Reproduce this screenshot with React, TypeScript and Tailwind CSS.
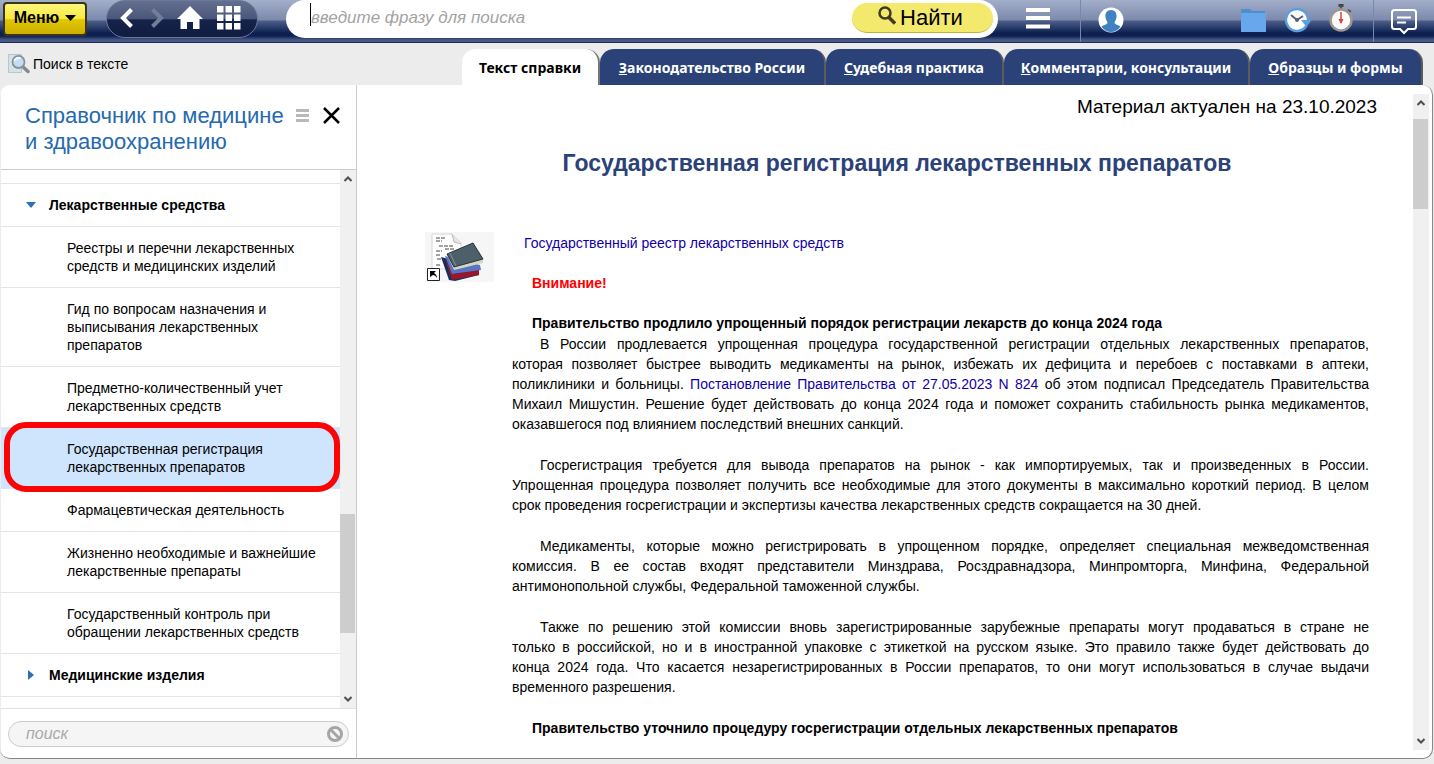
import type { ReactNode } from "react";

type Tab = { key: string; label: string; width: string };

const tabs: Tab[] = [
  { key: "З", label: "аконодательство России", width: "w-[226px]" },
  { key: "С", label: "удебная практика", width: "w-[178px]" },
  { key: "К", label: "омментарии, консультации", width: "w-[246px]" },
  { key: "О", label: "бразцы и формы", width: "w-[173px]" },
];

const topics = [
  "Реестры и перечни лекарственных средств и медицинских изделий",
  "Гид по вопросам назначения и выписывания лекарственных препаратов",
  "Предметно-количественный учет лекарственных средств",
  "Государственная регистрация лекарственных препаратов",
  "Фармацевтическая деятельность",
  "Жизненно необходимые и важнейшие лекарственные препараты",
  "Государственный контроль при обращении лекарственных средств",
];
const activeTopic = 3;

function SearchPageIcon() {
  return (
    <svg width="22" height="20" viewBox="0 0 22 20" aria-hidden="true">
      <path d="M.5.5h13v18H.5z" fill="#d5e3e6" stroke="#b4c8cc" />
      <path d="M14 12l6 5.500" stroke="#85898d" strokeWidth="3.500" strokeLinecap="round" />
      <circle cx="10.500" cy="8" r="6" fill="#c6dcf4" stroke="#8a9299" strokeWidth="1.800" />
      <path d="M6.500 7a4 4 0 0 1 6-2.500" fill="none" stroke="#f2f8ff" strokeWidth="2" />
    </svg>
  );
}

function GridIcon() {
  return (
    <svg width="24" height="24" viewBox="0 0 24 24" fill="#fff" aria-hidden="true">
      {[0, 8.5, 17].map((y) => [0, 8.5, 17].map((x) => <rect key={`${x}-${y}`} x={x} y={y} width="6.500" height="6.500" />))}
    </svg>
  );
}

function RecentIcon() {
  return (
    <svg width="28" height="26" viewBox="0 0 28 26" aria-hidden="true">
      <circle cx="13" cy="13" r="11" fill="#fff" />
      <path d="M22.500 18.500A11 11 0 1 1 24 13" fill="none" stroke="#5c9fe0" strokeWidth="2.500" />
      <path d="M17 13h10.500l-5 7z" fill="#5c9fe0" />
      <path d="M7 8l6 5 6-4" fill="none" stroke="#596273" strokeWidth="2" />
      <circle cx="13" cy="13" r="2" fill="#596273" />
    </svg>
  );
}

function StopwatchIcon() {
  return (
    <svg width="24" height="28" viewBox="0 0 24 28" aria-hidden="true">
      <path d="M9.500 0h5v3h-5z" fill="#444" />
      <path d="M11 2h2v4h-2zM19.500 5l3 2-1.500 2-3-2z" fill="#555" />
      <circle cx="12" cy="16" r="10.500" fill="#fbfafa" stroke="#9b9791" strokeWidth="2.500" />
      <path d="M12 8v11" stroke="#d8433f" strokeWidth="1.500" />
      <path d="M9.500 15h5L12 20z" fill="#d8433f" />
    </svg>
  );
}

function BooksIcon() {
  return (
    <svg width="69" height="50" viewBox="0 0 69 50" className="block" aria-hidden="true">
      <path d="M0 0h69v50H0z" fill="#f6f6f6" />
      <path d="M7 2h20l9 9v26H7z" fill="#fff" stroke="#d5d5d5" />
      <path d="M27 2l2 8 7 2" fill="#e4e4e4" stroke="#bbb" />
      <path d="M11 6h10M11 9h6M14 14h14M11 19h6M20 17h9M11 23h4M12 27h4M11 33h4" stroke="#444" strokeDasharray="4 1" />
      <path d="M16 25l8 23 6 1 24-6v-8z" fill="#12305f" />
      <path d="M20 27l7 21 27-5v-5l-25 4z" fill="#991726" />
      <path d="M20 24l7 18 29-4-1-5z" fill="#5a73c4" />
      <path d="M22 23l7 15 29-7v-4z" fill="#d7d4bf" />
      <path d="M22 22l26-11 10 16-29 8z" fill="#4d6069" stroke="#27343b" />
      <path d="M25 21l6 13" stroke="#849198" />
      <path d="M2.500 36.500h12v12h-12z" fill="#fff" stroke="#222" />
      <path d="M5 39h6l-2 2c2 1 3 3 3 5-1-2-3-3-4-3l-3 2z" fill="#000" />
    </svg>
  );
}

function ScrollArrow({ up, label }: { up?: boolean; label: string }) {
  return (
    <button type="button" aria-label={label} className="flex h-[18px] w-full items-center justify-center">
      <svg width="8" height="6" viewBox="0 0 8 6" fill="none" stroke="#505050" strokeWidth="2">
        <path d={up ? "M.5 5L4 1.500 7.500 5" : "M.5 1L4 4.500 7.500 1"} />
      </svg>
    </button>
  );
}

function Link({ children }: { children: ReactNode }) {
  return (
    <a href="#doc" className="text-[#1000a8]">
      {children}
    </a>
  );
}

function Header() {
  return (
    <header className="flex h-[43px] shrink-0 border-b border-[#1b2c60] bg-[linear-gradient(#a3aec9_0px,#7c89ab_20px,#4c5d89_21px,#0c2152_33px,#0c2152_36px,#4a5a86_40px,#4a5a86_42px)]">
      <button
        type="button"
        className="mt-0.5 ml-[3px] flex h-[34px] w-[84px] items-center justify-center gap-1.5 rounded-[4px] border-2 border-[#3b3513] bg-[linear-gradient(#fdf57e,#f6e93a_50%,#e0c800_52%,#cdae00)] pb-0.5 text-[16px] font-bold"
      >
        Меню
        <svg width="11" height="6" viewBox="0 0 11 6">
          <path d="M0 0h11L5.500 6z" />
        </svg>
      </button>

      <nav className="ml-[19px] flex h-[38px] w-[152px] items-center rounded-[19px] border border-[#6b7899] bg-[linear-gradient(#646f90,#4a5679_50%,#16234a_52%,#101c40)] pb-0.5 pl-3">
        <button type="button" aria-label="Назад" className="w-[31px]">
          <svg width="15" height="20" viewBox="0 0 15 20" fill="none" stroke="#fff" strokeWidth="4">
            <path d="M12.500 1.500L4 10l8.500 8.500" />
          </svg>
        </button>
        <button type="button" aria-label="Вперёд" className="w-[27px]">
          <svg width="15" height="20" viewBox="0 0 15 20" fill="none" stroke="#737d98" strokeWidth="4">
            <path d="M2.500 1.500L11 10l-8.500 8.500" />
          </svg>
        </button>
        <button type="button" aria-label="Домой" className="w-[40px]">
          <svg width="26" height="24" viewBox="0 0 26 24" fill="#fff">
            <path d="M13 0l13 13h-3.500v10h-6.500v-7h-6v7H3.500V13H0z" />
          </svg>
        </button>
        <button type="button" aria-label="Разделы">
          <GridIcon />
        </button>
      </nav>

      <form className="ml-[28px] flex h-[38px] min-w-0 flex-1 rounded-[19px] bg-white pr-[5px] pl-6">
        <div className="mt-[3px] h-[23px] w-px bg-black" />
        <input
          type="text"
          aria-label="Фраза для поиска"
          placeholder="введите фразу для поиска"
          className="h-[35px] min-w-0 flex-1 text-[17px] italic outline-none placeholder:text-[#a3a3a3]"
        />
        <button
          type="button"
          className="mt-[3px] flex h-[30px] w-[141px] items-center justify-center gap-1 rounded-full border-b border-[#b9b04a] bg-[#f2e96d] pr-1 text-[22px]"
        >
          <svg width="18" height="19" viewBox="0 0 18 19" fill="none" stroke="#3e3b20" className="mb-1">
            <circle cx="7" cy="7" r="5.500" strokeWidth="2.500" />
            <path d="M11 11.500l6 6" strokeWidth="3.500" />
          </svg>
          Найти
        </button>
      </form>

      <div className="flex w-[436px] shrink-0">
        <button type="button" aria-label="Список" className="flex w-[83px] justify-center border-r border-[#7b87a6] pt-2 pr-0.5">
          <svg width="24" height="21" viewBox="0 0 24 21" fill="#fff">
            <path d="M0 0h24v4H0zM0 8h24v4H0zM0 16.500h24v4H0z" />
          </svg>
        </button>
        <button type="button" aria-label="Профиль" className="ml-[17px] flex h-10 items-center">
          <svg width="26" height="26" viewBox="0 0 26 26">
            <circle cx="13" cy="13" r="12.500" fill="#fff" />
            <path d="M13 3c4 0 6 3 5.500 7-.3 3-1.500 4-2 5.500 0 2 4 2.500 6 4-2 3.500-5.500 5.500-9.500 5.500s-7.500-2-9.500-5.500c2-1.500 6-2 6-4-.5-1.500-1.700-2.500-2-5.500C7 6 9 3 13 3z" fill="#3f82c2" />
          </svg>
        </button>
        <div className="ml-auto flex h-10 items-center">
          <button type="button" aria-label="Папки" className="w-[43px]">
            <svg width="25" height="23" viewBox="0 0 25 23">
              <path d="M0 0h9l2 2h13v5H0z" fill="#4e8fd2" />
              <path d="M0 4h25v19H0z" fill="#68a7ec" />
            </svg>
          </button>
          <button type="button" aria-label="История" className="w-[45px]">
            <RecentIcon />
          </button>
          <button type="button" aria-label="Контроль" className="w-[44px] pb-1">
            <StopwatchIcon />
          </button>
        </div>
        <button type="button" aria-label="Сообщения" className="flex w-[61px] justify-center border-l border-[#7b87a6] pt-[9px]">
          <svg width="26" height="26" viewBox="0 0 26 26" fill="none" stroke="#fff" strokeWidth="2">
            <path d="M3.500 1h19Q25 1 25 3.500v14q0 2.500-2.500 2.500H17l-4 4-4-4H3.500Q1 20 1 17.500v-14Q1 1 3.500 1zM6 8.500h14M6 13.500h9" />
          </svg>
        </button>
      </div>
    </header>
  );
}

function Toolbar() {
  return (
    <div className="flex h-[42px] shrink-0 justify-between">
      <a href="#find" className="flex h-[42px] items-center gap-[3px] pl-2 text-[14px]">
        <SearchPageIcon />
        Поиск в тексте
      </a>
      <nav className="mt-1.5 mr-[11px] flex h-9 font-['Noto_Sans','Open_Sans',sans-serif] text-[14px] font-bold">
        <a href="#text" className="flex w-[138px] items-center justify-center rounded-t-[14px] border-r-2 border-[#777] bg-white">
          Текст справки
        </a>
        {tabs.map((tab) => (
          <a
            key={tab.key}
            href="#tab"
            className={`${tab.width} flex items-center justify-center rounded-t-[14px] border-r-2 border-[#5c5c5c] bg-[#2b4279] text-white`}
          >
            <u>{tab.key}</u>
            {tab.label}
          </a>
        ))}
      </nav>
    </div>
  );
}

function Sidebar() {
  return (
    <aside className="flex w-[357px] shrink-0 flex-col border-r border-l border-r-[#ccc] border-l-[#ececec]">
      <div className="flex h-[85px] shrink-0 border-b border-[#ccc] pl-6">
        <h2 className="w-[271px] pt-[18px] text-[22px] leading-[26px] text-[#2569ae]">Справочник по медицине и здравоохранению</h2>
        <button type="button" aria-label="Оглавление" className="mt-6 h-[13px]">
          <svg width="13" height="13" viewBox="0 0 13 13" fill="#b9b9b9" className="block">
            <path d="M0 0h13v3H0zM0 5h13v3H0zM0 10h13v3H0z" />
          </svg>
        </button>
        <button type="button" aria-label="Закрыть" className="mt-[22px] ml-3.5 h-[17px]">
          <svg width="17" height="17" viewBox="0 0 17 17" stroke="#000" strokeWidth="2.500" className="block">
            <path d="M1 1l15 15M16 1L1 16" />
          </svg>
        </button>
      </div>

      <div className="flex min-h-0 flex-1">
        <ul className="min-w-0 flex-1 overflow-hidden pt-[13px] text-[14px] leading-[18px]">
          <li className="flex items-center border-t border-[#e4e4e4] py-3 pl-6 font-bold">
            <svg width="24" height="7" viewBox="0 0 24 7" fill="#2a70b2">
              <path d="M1 0h10L6 6z" />
            </svg>
            Лекарственные средства
          </li>
          {topics.map((topic, i) => (
            <li key={topic} className={`border-t border-[#e4e4e4] ${i === activeTopic ? "relative z-10 bg-[#cee5fd]" : ""}`}>
              <a href="#topic" className="block py-3 pr-4 pl-[66px]">
                {topic}
              </a>
              {i === activeTopic && (
                <div className="absolute -top-1.5 right-0 -bottom-1 left-[3px] rounded-[22px] border-6 border-[#fb0405]" />
              )}
            </li>
          ))}
          <li className="flex items-center border-y border-[#e4e4e4] py-3 pl-6 font-bold">
            <svg width="24" height="10" viewBox="0 0 24 10" fill="#2a70b2">
              <path d="M3 0v10l6-5z" />
            </svg>
            Медицинские изделия
          </li>
        </ul>
        <div className="flex w-4 shrink-0 flex-col bg-[#f0f0f0]">
          <ScrollArrow up label="Вверх" />
          <div className="flex-[326]" />
          <div className="mr-px flex-[119] bg-[#cdcdcd]" />
          <div className="flex-[57]" />
          <ScrollArrow label="Вниз" />
        </div>
      </div>

      <div className="h-[50px] shrink-0 border-t border-[#e0e0e0] px-[7px] pt-3">
        <div className="flex h-[26px] items-center rounded-full border border-[#ccc] bg-[#f5f5f5] pr-1 pl-[17px]">
          <input
            type="text"
            aria-label="Поиск по справочнику"
            placeholder="поиск"
            className="min-w-0 flex-1 text-[16px] italic outline-none placeholder:text-[#a9a9a9]"
          />
          <button type="button" aria-label="Очистить">
            <svg width="18" height="18" viewBox="0 0 18 18" fill="none" stroke="#a5a5a5" className="block">
              <circle cx="9" cy="9" r="6.500" strokeWidth="3" />
              <path d="M4.500 4.500l9 9" strokeWidth="3" />
            </svg>
          </button>
        </div>
      </div>
    </aside>
  );
}

function Article() {
  return (
    <main className="flex min-w-0 flex-1 pt-[9px] pr-[3px]">
      <div className="min-w-0 flex-1 overflow-hidden pr-9 pl-[60px]">
        <p className="text-right text-[19px] leading-[26px]">Материал актуален на 23.10.2023</p>
        <h1 className="mt-[30px] text-center text-[23px] leading-[26px] font-bold text-[#2b4279]">
          Государственная регистрация лекарственных препаратов
        </h1>
        <div className="mt-14 flex px-2">
          <div className="w-[87px] shrink-0">
            <BooksIcon />
          </div>
          <div className="min-w-0 flex-1 pt-px text-[14px] leading-5">
            <p className="pl-3">
              <Link>Государственный реестр лекарственных средств</Link>
            </p>
            <p className="mt-5 pl-5 font-bold text-[#f00]">Внимание!</p>
            <h3 className="mt-5 pl-5 font-bold">Правительство продлило упрощенный порядок регистрации лекарств до конца 2024 года</h3>
            <div className="mt-px flex flex-col gap-[21px] text-justify indent-7">
              <p>
                В России продлевается упрощенная процедура государственной регистрации отдельных лекарственных препаратов,
                которая&nbsp;позволяет быстрее выводить медикаменты на рынок, избежать их дефицита и перебоев с поставками в аптеки,
                поликлиники&nbsp;и больницы. <Link>Постановление Правительства от 27.05.2023 N 824</Link> об этом подписал
                Председатель Правительства Михаил&nbsp;Мишустин. Решение будет действовать до конца 2024 года и поможет сохранить
                стабильность рынка медикаментов, оказавшегося&nbsp;под влиянием последствий внешних санкций.
              </p>
              <p>
                Госрегистрация требуется для вывода препаратов на рынок - как импортируемых, так и произведенных в России.
                Упрощенная&nbsp;процедура позволяет получить все необходимые для этого документы в максимально короткий период. В
                целом срок&nbsp;проведения госрегистрации и экспертизы качества лекарственных средств сокращается на 30 дней.
              </p>
              <p>
                Медикаменты, которые можно регистрировать в упрощенном порядке, определяет специальная межведомственная
                комиссия.&nbsp;В ее состав входят представители Минздрава, Росздравнадзора, Минпромторга, Минфина, Федеральной
                антимонопольной&nbsp;службы, Федеральной таможенной службы.
              </p>
              <p>
                Также по решению этой комиссии вновь зарегистрированные зарубежные препараты могут продаваться в стране не
                только&nbsp;в&nbsp;российской, но и в иностранной упаковке с этикеткой на русском языке. Это правило также будет
                действовать до конца&nbsp;2024&nbsp;года. Что касается незарегистрированных в России препаратов, то они могут
                использоваться в случае выдачи временного разрешения.
              </p>
            </div>
            <h3 className="mt-[21px] pl-5 font-bold">
              Правительство уточнило процедуру госрегистрации отдельных лекарственных препаратов
            </h3>
          </div>
        </div>
      </div>
      <div className="mb-2 flex w-4 shrink-0 flex-col bg-[#f0f0f0]">
        <ScrollArrow up label="Прокрутить вверх" />
        <div className="flex-[7]" />
        <div className="mr-px flex-[90] bg-[#cdcdcd]" />
        <div className="flex-[523]" />
        <ScrollArrow label="Прокрутить вниз" />
      </div>
    </main>
  );
}

export default function App() {
  return (
    <div className="flex h-screen flex-col overflow-hidden bg-[#ececec] font-['Liberation_Sans',Arial,sans-serif] text-black">
      <Header />
      <Toolbar />
      <div className="mr-px mb-[5px] flex min-h-0 flex-1 overflow-hidden rounded-[10px] border-r border-b border-[#888] bg-white">
        <Sidebar />
        <Article />
      </div>
    </div>
  );
}
